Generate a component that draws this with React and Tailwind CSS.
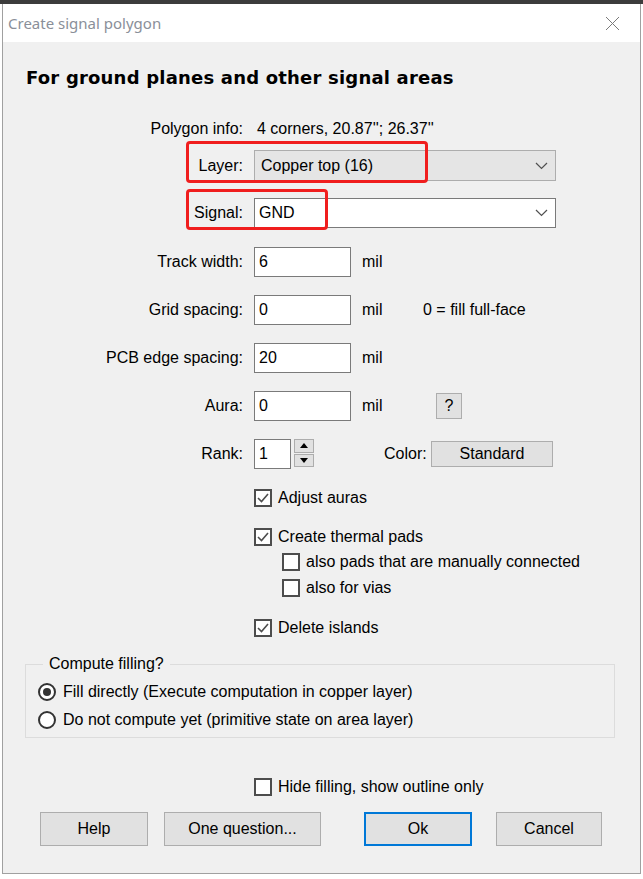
import React from 'react';

const Chevron = () => (
  <svg width="13" height="8" viewBox="0 0 13 8" className="shrink-0">
    <polyline points="1,1 6.5,6.5 12,1" fill="none" stroke="#505050" strokeWidth="1.2" />
  </svg>
);

const Checkbox = ({ checked }) => (
  <div className="w-[18px] h-[18px] border-2 border-[#4d4d4d] bg-white flex items-center justify-center shrink-0">
    {checked && (
      <svg width="14" height="14" viewBox="0 0 14 14">
        <polyline points="2,7 5.5,10.5 12,3" fill="none" stroke="#4d4d4d" strokeWidth="1.6" />
      </svg>
    )}
  </div>
);

const Radio = ({ checked }) => (
  <div className="w-[18px] h-[18px] rounded-full border-2 border-[#333] bg-white flex items-center justify-center shrink-0">
    {checked && <div className="w-[8px] h-[8px] rounded-full bg-[#333]" />}
  </div>
);

const Field = ({ label, value, children }) => (
  <div className="flex items-center h-[30px]">
    <div className="w-[240px] text-right">{label}</div>
    <div className="ml-[11px] w-[97px] h-[30px] bg-white border border-[#7a7a7a] flex items-center pl-[4px]">{value}</div>
    <div className="ml-[11px] w-[61px]">mil</div>
    {children}
  </div>
);

const CheckRow = ({ checked, label, className }) => (
  <div className={`flex items-center h-[18px] ${className}`}>
    <Checkbox checked={checked} />
    <span className="ml-[6px]">{label}</span>
  </div>
);

const Btn = ({ children, className }) => (
  <div className={`h-[34px] bg-[#e1e1e1] border border-[#adadad] flex items-center justify-center ${className}`}>
    {children}
  </div>
);

export default function App() {
  return (
    <div className="w-[643px] h-[879px] bg-white overflow-hidden" style={{ fontFamily: '"Liberation Sans", Arial, sans-serif' }}>
      <div className="h-[4px] bg-[#3c3c3c]" />
      <div className="ml-[2px] w-[639px] border-x border-b border-[#a0a0a0] text-[16px] text-black">
        {/* title bar */}
        <div className="h-[38px] bg-white flex items-center justify-between pl-[5px] pr-[20px]">
          <span className="text-[15px] text-[#8a8f99]" style={{ fontFamily: '"Noto Sans", "Open Sans", sans-serif' }}>Create signal polygon</span>
          <svg width="15" height="15" viewBox="0 0 15 15">
            <path d="M1 1 L14 14 M14 1 L1 14" stroke="#7a7a7a" strokeWidth="1" />
          </svg>
        </div>

        <div className="bg-[#f0f0f0] pb-[27px]">
          <div className="pt-[25px] pl-[23px] text-[18px] font-bold leading-[22px] tracking-[0.2px]" style={{ fontFamily: '"DejaVu Sans", Verdana, sans-serif' }}>For ground planes and other signal areas</div>

          <div className="mt-[31px] flex items-center h-[18px]">
            <div className="w-[240px] text-right">Polygon info:</div>
            <div className="ml-[14px]">4 corners, 20.87''; 26.37''</div>
          </div>

          {/* Layer */}
          <div className="relative mt-[12px] flex items-center h-[31px]">
            <div className="w-[240px] text-right">Layer:</div>
            <div className="ml-[11px] w-[302px] h-[31px] bg-[#e5e5e5] border border-[#adadad] flex items-center justify-between pl-[6px] pr-[7px]">
              <span>Copper top (16)</span>
              <Chevron />
            </div>
            <div className="absolute left-[183px] top-[-9px] w-[242px] h-[42px] border-[3px] border-[#f01e1e] rounded-[4px] pointer-events-none" />
          </div>

          {/* Signal */}
          <div className="relative mt-[17px] flex items-center h-[30px]">
            <div className="w-[240px] text-right">Signal:</div>
            <div className="ml-[11px] w-[302px] h-[30px] bg-white border border-[#7a7a7a] flex items-center justify-between pl-[4px] pr-[7px]">
              <span>GND</span>
              <Chevron />
            </div>
            <div className="absolute left-[183px] top-[-9px] w-[142px] h-[41px] border-[3px] border-[#f01e1e] rounded-[4px] pointer-events-none" />
          </div>

          <div className="mt-[19px]">
            <Field label="Track width:" value="6" />
          </div>
          <div className="mt-[18px]">
            <Field label="Grid spacing:" value="0">
              <span>0 = fill full-face</span>
            </Field>
          </div>
          <div className="mt-[18px]">
            <Field label="PCB edge spacing:" value="20" />
          </div>
          <div className="mt-[18px]">
            <Field label="Aura:" value="0">
              <div className="ml-[13px] w-[26px] h-[26px] bg-[#e1e1e1] border border-[#adadad] flex items-center justify-center">?</div>
            </Field>
          </div>

          {/* Rank */}
          <div className="mt-[18px] flex items-center h-[30px]">
            <div className="w-[240px] text-right">Rank:</div>
            <div className="ml-[11px] w-[37px] h-[30px] bg-white border border-[#7a7a7a] flex items-center pl-[4px]">1</div>
            <div className="ml-[3px] w-[20px] h-[28px] flex flex-col gap-[1px] self-start">
              <div className="flex-1 bg-[#e1e1e1] border border-[#adadad] flex items-center justify-center">
                <svg width="8" height="5" viewBox="0 0 8 5"><polygon points="0,5 8,5 4,0" fill="#000" /></svg>
              </div>
              <div className="flex-1 bg-[#e1e1e1] border border-[#adadad] flex items-center justify-center">
                <svg width="8" height="5" viewBox="0 0 8 5"><polygon points="0,0 8,0 4,5" fill="#000" /></svg>
              </div>
            </div>
            <span className="ml-[70px] w-[47px]">Color:</span>
            <div className="w-[122px] h-[26px] bg-[#e1e1e1] border border-[#adadad] flex items-center justify-center">Standard</div>
          </div>

          <CheckRow checked label="Adjust auras" className="mt-[20px] ml-[251px]" />
          <CheckRow checked label="Create thermal pads" className="mt-[21px] ml-[251px]" />
          <CheckRow label="also pads that are manually connected" className="mt-[7px] ml-[279px]" />
          <CheckRow label="also for vias" className="mt-[8px] ml-[279px]" />
          <CheckRow checked label="Delete islands" className="mt-[22px] ml-[251px]" />

          {/* group box */}
          <div className="relative mt-[27px] ml-[22px] w-[590px] h-[74px] border border-[#dcdcdc]">
            <span className="absolute left-[17px] top-[-11px] px-[6px] bg-[#f0f0f0] leading-[20px]">Compute filling?</span>
            <div className="flex items-center h-[18px] mt-[18px] ml-[12px]">
              <Radio checked />
              <span className="ml-[7px]">Fill directly (Execute computation in copper layer)</span>
            </div>
            <div className="flex items-center h-[18px] mt-[10px] ml-[12px]">
              <Radio />
              <span className="ml-[7px]">Do not compute yet (primitive state on area layer)</span>
            </div>
          </div>

          <CheckRow label="Hide filling, show outline only" className="mt-[40px] ml-[251px]" />

          <div className="mt-[16px] flex items-center">
            <Btn className="ml-[37px] w-[108px]">Help</Btn>
            <Btn className="ml-[16px] w-[157px]">One question...</Btn>
            <div className="ml-[43px] w-[108px] h-[34px] bg-[#e1e1e1] border-2 border-[#0078d7] flex items-center justify-center">Ok</div>
            <Btn className="ml-[24px] w-[106px]">Cancel</Btn>
          </div>
        </div>
      </div>
    </div>
  );
}
